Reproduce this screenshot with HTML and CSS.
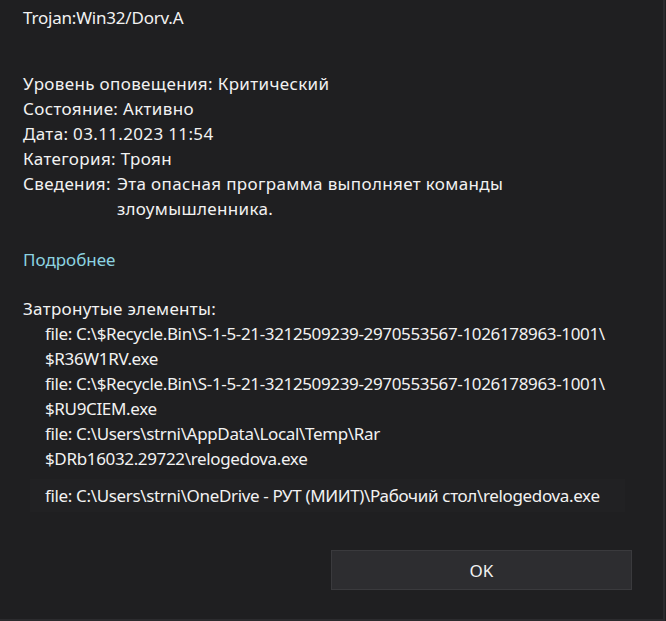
FILE: index.html
```html
<!DOCTYPE html>
<html lang="ru">
<head>
    <meta charset="UTF-8">
    <meta name="viewport" content="width=device-width, initial-scale=1.0">
    <title>Trojan:Win32/Dorv.A</title>
    <link rel="stylesheet" href="styles.css">
</head>
<body>
    <div class="dialog">
        <div class="content">
            <div class="threat-name">Trojan:Win32/Dorv.A</div>
            <div class="details">
                <div class="row">Уровень оповещения: Критический</div>
                <div class="row">Состояние: Активно</div>
                <div class="row">Дата: 03.11.2023 11:54</div>
                <div class="row">Категория: Троян</div>
                <div class="row grid-row"><span class="label">Сведения:</span><span>Эта опасная программа выполняет команды злоумышленника.</span></div>
            </div>
            <a class="more-link" href="#">Подробнее</a>
            <div class="affected-title">Затронутые элементы:</div>
            <ul class="items">
                <li>file: C:\$Recycle.Bin\S-1-5-21-3212509239-2970553567-1026178963-1001\ $R36W1RV.exe</li>
                <li>file: C:\$Recycle.Bin\S-1-5-21-3212509239-2970553567-1026178963-1001\ $RU9CIEM.exe</li>
                <li>file: C:\Users\strni\AppData\Local\Temp\Rar $DRb16032.29722\relogedova.exe</li>
                <li class="hovered">file: C:\Users\strni\OneDrive - РУТ (МИИТ)\Рабочий стол\relogedova.exe</li>
            </ul>
        </div>
        <div class="footer">
            <button type="button" class="ok-button">OK</button>
        </div>
    </div>
</body>
</html>
```

FILE: styles.css
```css
* {
    box-sizing: border-box;
    margin: 0;
    padding: 0;
    font-family: 'Noto Sans', 'Open Sans', sans-serif;
}
html, body {
    height: 100%;
}
body {
    background: #1f1f21;
    color: #f2f2f2;
    font-size: 17px;
}
.dialog {
    height: 100%;
    display: flex;
    flex-direction: column;
    border-right: 2px solid #2b2b2e;
    border-bottom: 2px solid #2b2b2e;
    margin-right: 1px;
}
.content {
    padding: 5px 0 0 23px;
    flex: 1;
}
.threat-name {
    line-height: 25px;
    margin-bottom: 41px;
    letter-spacing: -0.2px;
}
.details {
    line-height: 25px;
    letter-spacing: 0.35px;
}
.grid-row {
    display: grid;
    grid-template-columns: auto 1fr;
    column-gap: 6px;
}
.grid-row span:last-child {
    max-width: 420px;
}
.more-link {
    display: block;
    color: #8cd3e0;
    text-decoration: none;
    line-height: 25px;
    margin-top: 26px;
}
.affected-title {
    line-height: 25px;
    margin-top: 24px;
    letter-spacing: 0.3px;
}
.items {
    list-style: none;
    padding-left: 22px;
    line-height: 25px;
    letter-spacing: -0.35px;
}
.items li {
    max-width: 590px;
}
.items li.hovered {
    max-width: none;
    margin-top: 8px;
    margin-left: -15px;
    padding: 4px 0 4px 15px;
    margin-right: 38px;
    background: #212123;
}
.footer {
    display: flex;
    justify-content: flex-end;
    padding: 0 31px 29px 0;
}
.ok-button {
    width: 301px;
    height: 40px;
    background: #2d2d30;
    border: 1px solid #3a3a3d;
    color: #f2f2f2;
    font-size: 17px;
}
```
